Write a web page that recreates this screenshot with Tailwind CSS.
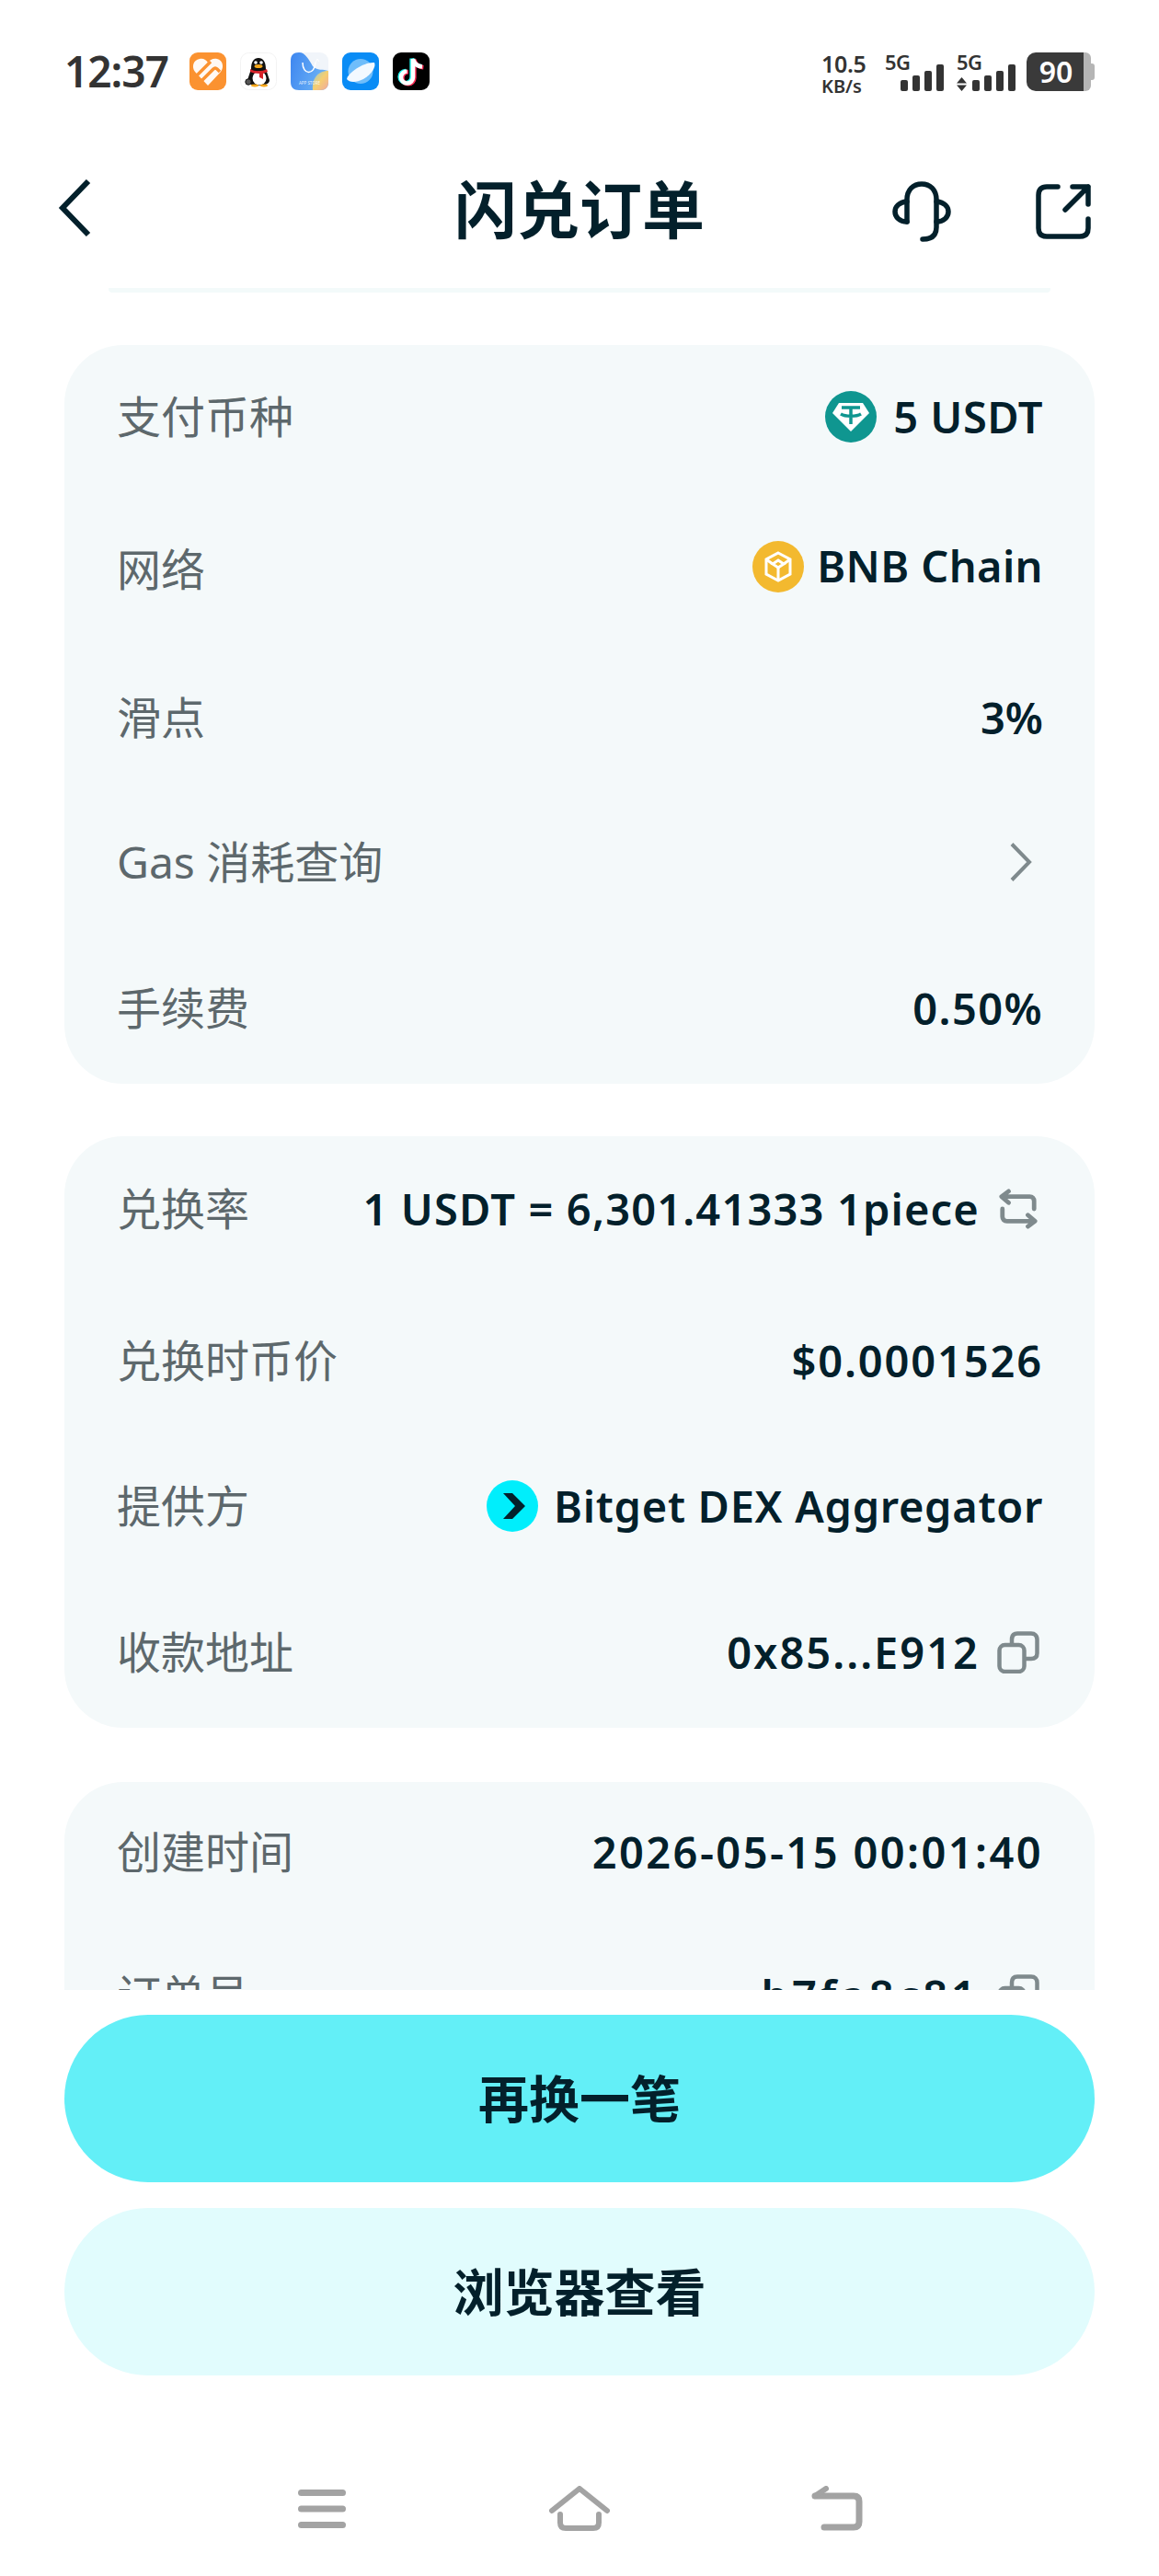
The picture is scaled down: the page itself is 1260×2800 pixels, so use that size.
<!doctype html>
<html lang="zh-CN">
<head>
<meta charset="UTF-8" />
<title>闪兑订单</title>
<script src="https://cdn.jsdelivr.net/npm/@tailwindcss/browser@4"></script>
</head>
<body>
<div class="w-[1260px] h-[2800px] bg-white flex flex-col text-[#03202b] font-['Noto_Sans','Noto_Sans_CJK_SC',sans-serif]">

  <!-- Status bar -->
  <div class="h-[160px] pt-[56px] pl-[70px] pr-[70px] flex justify-between items-start">
    <div class="flex items-center h-[42px]">
      <span class="text-[46px] leading-none font-semibold text-[#333] w-[136px] tracking-[-1px]">12:37</span>
      <div class="flex gap-[15px]">
        <!-- orange heart -->
        <svg class="w-[40px] h-[41px]" viewBox="0 0 40 41"><rect width="40" height="41" rx="9" fill="#fb9230"/><path d="M20 36 L6 21 C2 16 4 8 11 7 C15 6 18 8 20 11 C22 8 26 6 30 7 C36 8 38 16 34 21Z" fill="#fff" opacity=".95"/><path d="M8 25 L23 10 M13 31 L26 18 Q28 16 30 18 L33 21" fill="none" stroke="#fb9230" stroke-width="3.5"/></svg>
        <!-- qq -->
        <svg class="w-[40px] h-[41px]" viewBox="0 0 40 41"><rect x=".5" y=".5" width="39" height="40" rx="9" fill="#fff" stroke="#f3f3f3"/><path d="M12 18 C12 10 15 6 20 6 C25 6 28 10 28 18 L32 30 C32 34 27 36 20 36 C13 36 8 34 8 30Z" fill="#111"/><ellipse cx="21" cy="28" rx="7.5" ry="7.5" fill="#fff"/><path d="M11 18 C16 21 24 21 29 18 L30 21 L25 23 L25 29 L21 27 L21 23 C17 23 13 22 11 21Z" fill="#d8232a"/><ellipse cx="20" cy="15" rx="4.5" ry="2" fill="#f7a81b"/><circle cx="17" cy="11" r="1.8" fill="#fff"/><circle cx="23" cy="11" r="1.8" fill="#fff"/><ellipse cx="16" cy="36" rx="4" ry="1.4" fill="#f7a81b"/><ellipse cx="26" cy="36" rx="4" ry="1.4" fill="#f7a81b"/><circle cx="9" cy="32" r="3.2" fill="#555" stroke="#111"/></svg>
        <!-- app store -->
        <svg class="w-[41px] h-[41px]" viewBox="0 0 41 41"><defs><linearGradient id="st" x1="0" y1="0" x2="1" y2=".3"><stop offset="0" stop-color="#3d86f0"/><stop offset="1" stop-color="#6cb2f5"/></linearGradient><linearGradient id="st2" x1="0" y1="0" x2="1" y2="1"><stop offset="0" stop-color="#8fc9d8"/><stop offset=".5" stop-color="#f5cf70"/><stop offset="1" stop-color="#f0a9a0"/></linearGradient></defs><rect width="41" height="41" rx="9" fill="#f1f5fa"/><path d="M0 9 C0 3 3 0 9 0 C16 0 20 8 24 15 C28 20 36 18 41 20 L41 32 C41 38 38 41 32 41 L9 41 C3 41 0 38 0 32Z" fill="url(#st)"/><path d="M41 20 L41 32 C41 38 38 41 32 41 L24 41 C23 30 28 20 41 20Z" fill="url(#st2)"/><path d="M13 11 C13 25 26 25 27 11" fill="none" stroke="#fff" stroke-width="1.5"/><path d="M27 11 L29 7 L31 10" fill="none" stroke="#fff" stroke-width="1"/><text x="20.5" y="35" text-anchor="middle" font-size="4.5" fill="#fff" fill-opacity=".85">APP STORE</text></svg>
        <!-- browser -->
        <svg class="w-[40px] h-[41px]" viewBox="0 0 40 41"><rect width="40" height="41" rx="9" fill="#0a8cf5"/><circle cx="20" cy="20.5" r="13.5" fill="#6fbdfa"/><path d="M5 29 C6 22 24 10 35 11 C37 15 33 23 23 29 C15 33 8 33 5 29Z" fill="#f3f9ff"/></svg>
        <!-- tiktok -->
        <svg class="w-[40px] h-[41px]" viewBox="0 0 40 41"><rect width="40" height="41" rx="9" fill="#000"/><path d="M22 7 V27 A6.5 6.5 0 1 1 15.5 20.5 M22 7 C23 12 27 15 32 15.5" fill="none" stroke="#25f4ee" stroke-width="4.5" transform="translate(-1.4 -.6)"/><path d="M22 7 V27 A6.5 6.5 0 1 1 15.5 20.5 M22 7 C23 12 27 15 32 15.5" fill="none" stroke="#fe2c55" stroke-width="4.5" transform="translate(1.4 .8)"/><path d="M22 7 V27 A6.5 6.5 0 1 1 15.5 20.5 M22 7 C23 12 27 15 32 15.5" fill="none" stroke="#fff" stroke-width="4.5"/></svg>
      </div>
    </div>
    <div class="flex items-start h-[42px] text-[#333] pt-[1px]">
      <div class="w-[69px] flex flex-col font-semibold leading-none">
        <span class="text-[25px] tracking-[-.3px] h-[25px]">10.5</span>
        <span class="text-[20px] mt-[2px]">KB/s</span>
      </div>
      <!-- signal 1 -->
      <div class="relative w-[65px] h-[42px]">
        <span class="absolute left-0 -top-[1px] text-[22px] leading-none font-semibold tracking-[-.5px]">5G</span>
        <svg class="absolute left-[17px] top-[13px] w-[48px] h-[29px]" viewBox="0 0 48 29" fill="#333"><rect y="17" width="8" height="12" rx="2"/><rect x="13" y="12" width="8" height="17" rx="2"/><rect x="26" y="7" width="8" height="22" rx="2"/><rect x="39" width="8" height="29" rx="2"/></svg>
      </div>
      <!-- signal 2 -->
      <div class="relative w-[76px] h-[42px] ml-[13px]">
        <span class="absolute left-0 -top-[1px] text-[22px] leading-none font-semibold tracking-[-.5px]">5G</span>
        <svg class="absolute left-0 top-[27px] w-[11px] h-[15px]" viewBox="0 0 11 15" fill="#333"><path d="M5.5 0 L11 6.5 H0Z M5.5 15 L11 8.5 H0Z"/></svg>
        <svg class="absolute left-[17px] top-[13px] w-[48px] h-[29px]" viewBox="0 0 48 29" fill="#333"><rect y="17" width="8" height="12" rx="2"/><rect x="13" y="12" width="8" height="17" rx="2"/><rect x="26" y="7" width="8" height="22" rx="2"/><rect x="39" width="8" height="29" rx="2"/></svg>
      </div>
      <!-- battery -->
      <div class="flex items-center h-[42px]">
        <div class="w-[62px] h-[42px] bg-[#3a3a3a] rounded-l-[10px] flex items-center justify-center text-white text-[32px] leading-none font-semibold pl-[2px]">90</div>
        <div class="w-[8px] h-[42px] bg-[#b5b5b5] rounded-r-[6px]"></div>
        <div class="w-[4px] h-[18px] bg-[#b5b5b5] rounded-r-[3px]"></div>
      </div>
    </div>
  </div>

  <!-- Header -->
  <header class="h-[153px] px-[63px] pt-[35px] grid grid-cols-[1fr_auto_1fr] items-start">
    <svg class="w-[36px] h-[62px]" viewBox="0 0 36 62" fill="none" stroke="#03202b" stroke-width="6"><path d="M33 2 L5 31 L33 60"/></svg>
    <h1 class="text-[68px] leading-[66px] font-semibold">闪兑订单</h1>
    <div class="flex justify-end items-center gap-[92px] pr-[11px] h-[66px] pt-[3px]">
      <svg class="w-[64px] h-[66px]" viewBox="0 0 64 66" fill="none" stroke="#03202b" stroke-width="5.5" stroke-linecap="round" stroke-linejoin="round"><path d="M16 44 V20 C16 9 23 3 32 3 C41 3 48 9 48 20 V50 C48 58 44 63 33 63"/><path d="M16 22 C7 23 3 28 3 33 C3 39 8 44 16 44"/><path d="M48 22 C57 23 61 28 61 33 C61 39 56 44 48 44"/></svg>
      <svg class="w-[60px] h-[60px]" viewBox="0 0 60 60" fill="none" stroke="#03202b" stroke-width="5.5" stroke-linecap="round" stroke-linejoin="round"><path d="M24 3 H12 C6 3 3 6 3 12 V48 C3 54 6 57 12 57 H48 C54 57 57 54 57 48 V38"/><path d="M32 28 L57 3 M40 3 H57 V22"/></svg>
    </div>
  </header>

  <!-- Scrolling content -->
  <main class="h-[1850px] overflow-hidden flex flex-col">
    <div class="h-[5px] mx-[118px] shrink-0 bg-[#f3fafa] rounded-b-[4px]"></div>

    <section class="mt-[57px] mx-[70px] h-[803px] shrink-0 bg-[#f4f9fa] rounded-[64px] pl-[57px] pr-[56px] flex flex-col text-[47px] font-semibold">
      <div class="h-[156px] flex justify-between items-center">
        <span class="text-[48px] font-normal text-[#5d686c]">支付币种</span>
        <span class="flex items-center gap-[18px]">
          <svg class="w-[56px] h-[56px]" viewBox="0 0 56 56"><circle cx="28" cy="28" r="28" fill="#0f9690"/><path d="M15 13 H41 L48 24 L28 44 L8 24Z" fill="#fff"/><path d="M18 18 H38 M28 18 V36 M17 25 C22 28 34 28 39 25" fill="none" stroke="#0f9690" stroke-width="3.5"/></svg>
          <span class="tracking-[.5px]">5 USDT</span>
        </span>
      </div>
      <div class="h-[176px] flex justify-between items-center">
        <span class="text-[48px] font-normal text-[#5d686c]">网络</span>
        <span class="flex items-center gap-[14px] mb-[7px]">
          <svg class="w-[56px] h-[56px]" viewBox="0 0 56 56"><circle cx="28" cy="28" r="28" fill="#f3b92f"/><g fill="none" stroke="#fff" stroke-width="3"><path d="M28 13 L41 20 V36 L28 43 L15 36 V20Z"/><path d="M28 21 L34 25 L28 29 L22 25Z"/><path d="M28 29 V43 M15 20 L22 25 M41 20 L34 25"/></g></svg>
          <span class="tracking-[.4px]">BNB Chain</span>
        </span>
      </div>
      <div class="h-[146px] flex justify-between items-center">
        <span class="text-[48px] font-normal text-[#5d686c]">滑点</span>
        <span>3%</span>
      </div>
      <div class="h-[168px] flex justify-between items-center">
        <span class="text-[48px] font-normal text-[#5d686c]">Gas 消耗查询</span>
        <svg class="w-[24px] h-[42px] mr-[12px]" viewBox="0 0 24 42" fill="none" stroke="#7f8a8d" stroke-width="4"><path d="M2 1.5 L21 21 L2 40.5"/></svg>
      </div>
      <div class="h-[157px] pb-[7px] flex justify-between items-center">
        <span class="text-[48px] font-normal text-[#5d686c]">手续费</span>
        <span class="tracking-[1.4px]">0.50%</span>
      </div>
    </section>

    <section class="mt-[57px] mx-[70px] h-[643px] shrink-0 bg-[#f4f9fa] rounded-[64px] pl-[57px] pr-[56px] flex flex-col text-[47px] font-semibold">
      <div class="h-[158px] flex justify-between items-center">
        <span class="text-[48px] font-normal text-[#5d686c]">兑换率</span>
        <span class="flex items-center gap-[20px] pr-[5px]">
          <span class="tracking-[1.15px]">1 USDT = 6,301.41333 1piece</span>
          <svg class="w-[44px] h-[44px]" viewBox="0 0 46 44" fill="none" stroke="#7f8a8d" stroke-width="5" stroke-linecap="round" stroke-linejoin="round"><path d="M41 22 V13 C41 10 39 8 36 8 H5 M12 2 L4 8 L12 15"/><path d="M5 22 V31 C5 34 7 36 10 36 H41 M34 29 L42 36 L34 42"/></svg>
        </span>
      </div>
      <div class="h-[172px] flex justify-between items-center">
        <span class="text-[48px] font-normal text-[#5d686c]">兑换时币价</span>
        <span class="tracking-[1.85px]">$0.0001526</span>
      </div>
      <div class="h-[144px] flex justify-between items-center">
        <span class="text-[48px] font-normal text-[#5d686c]">提供方</span>
        <span class="flex items-center gap-[17px]">
          <svg class="w-[56px] h-[56px]" viewBox="0 0 56 56"><circle cx="28" cy="28" r="28" fill="#00eefc"/><path d="M18 14 H28 L42 28 L28 42 H18 L31 28Z" fill="#03202b"/></svg>
          <span class="tracking-[.7px]">Bitget DEX Aggregator</span>
        </span>
      </div>
      <div class="h-[169px] pt-[5px] flex justify-between items-center">
        <span class="text-[48px] font-normal text-[#5d686c]">收款地址</span>
        <span class="flex items-center gap-[19px] pr-[4px]">
          <span class="tracking-[2px]">0x85...E912</span>
          <svg class="w-[46px] h-[46px]" viewBox="0 0 46 46" fill="none" stroke="#7f8a8d" stroke-width="4.5"><rect x="2.5" y="15" width="27" height="29" rx="6"/><path d="M16 15 V9 C16 5 18 2.5 22 2.5 H37 C41 2.5 43.5 5 43.5 9 V24 C43.5 28 41 30 37 30 H29.5"/></svg>
        </span>
      </div>
    </section>

    <section class="mt-[59px] mx-[70px] h-[400px] shrink-0 bg-[#f4f9fa] rounded-t-[64px] pl-[57px] pr-[56px] flex flex-col text-[47px] font-semibold">
      <div class="h-[152px] flex justify-between items-center">
        <span class="text-[48px] font-normal text-[#5d686c]">创建时间</span>
        <span class="tracking-[2.4px]">2026-05-15 00:01:40</span>
      </div>
      <div class="h-[160px] flex justify-between items-center">
        <span class="text-[48px] font-normal text-[#5d686c]">订单号</span>
        <span class="flex items-center gap-[19px] pr-[4px]">
          <span class="tracking-[4px]">...b7fa8c81</span>
          <svg class="w-[46px] h-[46px]" viewBox="0 0 46 46" fill="none" stroke="#7f8a8d" stroke-width="4.5"><rect x="2.5" y="15" width="27" height="29" rx="6"/><path d="M16 15 V9 C16 5 18 2.5 22 2.5 H37 C41 2.5 43.5 5 43.5 9 V24 C43.5 28 41 30 37 30 H29.5"/></svg>
        </span>
      </div>
    </section>
  </main>

  <!-- Actions -->
  <div class="pt-[27px] px-[70px] flex flex-col gap-[28px] text-[55px] font-semibold">
    <button class="h-[182px] rounded-full bg-[#63eff7] text-[#03202b]">再换一笔</button>
    <button class="h-[182px] rounded-full bg-[#e1fcfd] text-[#03202b]">浏览器查看</button>
  </div>

  <!-- Navigation bar -->
  <nav class="pt-[120px] pl-[324px] flex items-start">
    <svg class="w-[52px] h-[42px] mt-[4px]" viewBox="0 0 52 42" fill="#a3a3a3"><rect width="52" height="7" rx="3.5"/><rect y="17.5" width="52" height="7" rx="3.5"/><rect y="35" width="52" height="7" rx="3.5"/></svg>
    <svg class="ml-[221px] w-[66px] h-[49px]" viewBox="0 0 66 49" fill="none" stroke="#a3a3a3" stroke-width="6" stroke-linecap="round" stroke-linejoin="round"><path d="M3 27 L33 3 L63 27"/><path d="M12 31 V40 C12 44 14 46 18 46 H48 C52 46 54 44 54 40 V31"/></svg>
    <svg class="ml-[219px] w-[56px] h-[49px]" viewBox="0 0 56 49" fill="none" stroke="#a3a3a3" stroke-width="7" stroke-linecap="round" stroke-linejoin="round"><path d="M4 11 H46 C50 11 52 13 52 17 V39 C52 43 50 45 46 45 H14"/><path d="M4 11 L16 3" stroke-width="6"/></svg>
  </nav>
</div>
</body>
</html>
